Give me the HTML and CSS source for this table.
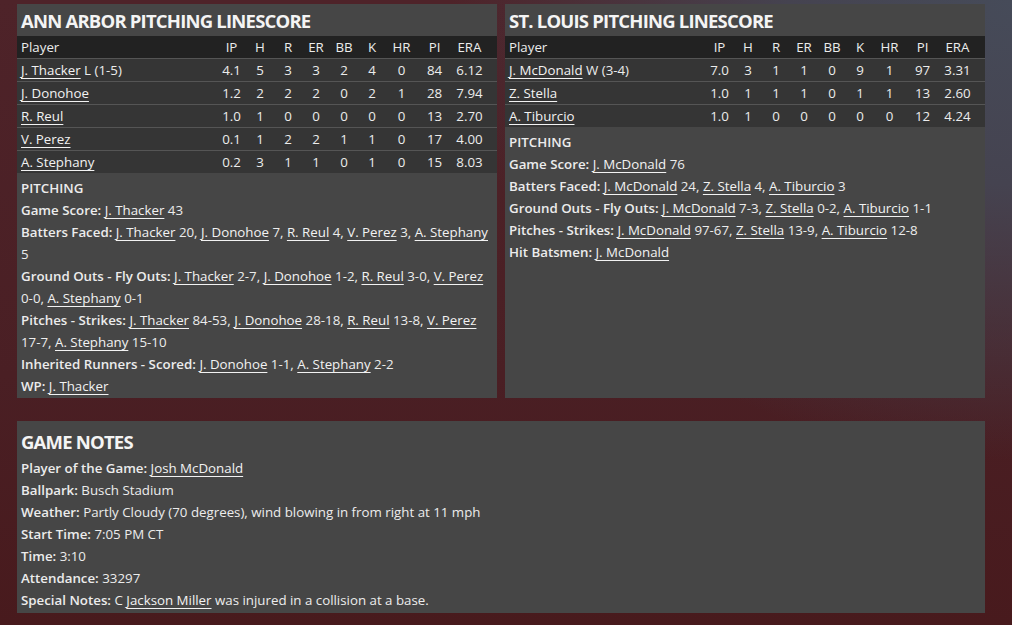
FILE: index.html
```html
<!DOCTYPE html>
<html>
<head>
<meta charset="utf-8">
<link rel="stylesheet" href="styles.css">
</head>
<body>
<div class="page">
  <div class="top-row">
    <section class="panel">
      <h2 class="panel-title">ANN ARBOR PITCHING LINESCORE</h2>
      <table class="linescore">
        <colgroup>
          <col class="c-player"><col class="c-ip"><col class="c-n"><col class="c-n"><col class="c-n"><col class="c-n"><col class="c-n"><col class="c-hr"><col class="c-w"><col class="c-w"><col class="c-pad">
        </colgroup>
        <thead>
          <tr><th class="player">Player</th><th>IP</th><th>H</th><th>R</th><th>ER</th><th>BB</th><th>K</th><th>HR</th><th>PI</th><th>ERA</th><th></th></tr>
        </thead>
        <tbody>
          <tr><td class="player"><a>J. Thacker</a> L (1-5)</td><td>4.1</td><td>5</td><td>3</td><td>3</td><td>2</td><td>4</td><td>0</td><td>84</td><td>6.12</td><td></td></tr>
          <tr><td class="player"><a>J. Donohoe</a></td><td>1.2</td><td>2</td><td>2</td><td>2</td><td>0</td><td>2</td><td>1</td><td>28</td><td>7.94</td><td></td></tr>
          <tr><td class="player"><a>R. Reul</a></td><td>1.0</td><td>1</td><td>0</td><td>0</td><td>0</td><td>0</td><td>0</td><td>13</td><td>2.70</td><td></td></tr>
          <tr><td class="player"><a>V. Perez</a></td><td>0.1</td><td>1</td><td>2</td><td>2</td><td>1</td><td>1</td><td>0</td><td>17</td><td>4.00</td><td></td></tr>
          <tr><td class="player"><a>A. Stephany</a></td><td>0.2</td><td>3</td><td>1</td><td>1</td><td>0</td><td>1</td><td>0</td><td>15</td><td>8.03</td><td></td></tr>
        </tbody>
      </table>
      <div class="notes">
        <p><b>PITCHING</b></p>
        <p><b>Game Score:</b> <a>J. Thacker</a> 43</p>
        <p><b>Batters Faced:</b> <a>J. Thacker</a> 20, <a>J. Donohoe</a> 7, <a>R. Reul</a> 4, <a>V. Perez</a> 3, <a>A. Stephany</a> 5</p>
        <p><b>Ground Outs - Fly Outs:</b> <a>J. Thacker</a> <span class="nw">2-7,</span> <a>J. Donohoe</a> <span class="nw">1-2,</span> <a>R. Reul</a> <span class="nw">3-0,</span> <a>V. Perez</a> <span class="nw">0-0,</span> <a>A. Stephany</a> <span class="nw">0-1</span></p>
        <p><b>Pitches - Strikes:</b> <a>J. Thacker</a> <span class="nw">84-53,</span> <a>J. Donohoe</a> <span class="nw">28-18,</span> <a>R. Reul</a> <span class="nw">13-8,</span> <a>V. Perez</a> <span class="nw">17-7,</span> <a>A. Stephany</a> <span class="nw">15-10</span></p>
        <p><b>Inherited Runners - Scored:</b> <a>J. Donohoe</a> <span class="nw">1-1,</span> <a>A. Stephany</a> <span class="nw">2-2</span></p>
        <p><b>WP:</b> <a>J. Thacker</a></p>
      </div>
    </section>
    <section class="panel">
      <h2 class="panel-title">ST. LOUIS PITCHING LINESCORE</h2>
      <table class="linescore">
        <colgroup>
          <col class="c-player"><col class="c-ip"><col class="c-n"><col class="c-n"><col class="c-n"><col class="c-n"><col class="c-n"><col class="c-hr"><col class="c-w"><col class="c-w"><col class="c-pad">
        </colgroup>
        <thead>
          <tr><th class="player">Player</th><th>IP</th><th>H</th><th>R</th><th>ER</th><th>BB</th><th>K</th><th>HR</th><th>PI</th><th>ERA</th><th></th></tr>
        </thead>
        <tbody>
          <tr><td class="player"><a>J. McDonald</a> W (3-4)</td><td>7.0</td><td>3</td><td>1</td><td>1</td><td>0</td><td>9</td><td>1</td><td>97</td><td>3.31</td><td></td></tr>
          <tr><td class="player"><a>Z. Stella</a></td><td>1.0</td><td>1</td><td>1</td><td>1</td><td>0</td><td>1</td><td>1</td><td>13</td><td>2.60</td><td></td></tr>
          <tr><td class="player"><a>A. Tiburcio</a></td><td>1.0</td><td>1</td><td>0</td><td>0</td><td>0</td><td>0</td><td>0</td><td>12</td><td>4.24</td><td></td></tr>
        </tbody>
      </table>
      <div class="notes">
        <p><b>PITCHING</b></p>
        <p><b>Game Score:</b> <a>J. McDonald</a> 76</p>
        <p><b>Batters Faced:</b> <a>J. McDonald</a> 24, <a>Z. Stella</a> 4, <a>A. Tiburcio</a> 3</p>
        <p><b>Ground Outs - Fly Outs:</b> <a>J. McDonald</a> <span class="nw">7-3,</span> <a>Z. Stella</a> <span class="nw">0-2,</span> <a>A. Tiburcio</a> <span class="nw">1-1</span></p>
        <p><b>Pitches - Strikes:</b> <a>J. McDonald</a> <span class="nw">97-67,</span> <a>Z. Stella</a> <span class="nw">13-9,</span> <a>A. Tiburcio</a> <span class="nw">12-8</span></p>
        <p><b>Hit Batsmen:</b> <a>J. McDonald</a></p>
      </div>
    </section>
  </div>
  <section class="panel game-notes">
    <h2 class="panel-title">GAME NOTES</h2>
    <div class="notes">
      <p><b>Player of the Game:</b> <a>Josh McDonald</a></p>
      <p><b>Ballpark:</b> Busch Stadium</p>
      <p><b>Weather:</b> Partly Cloudy (70 degrees), wind blowing in from right at 11 mph</p>
      <p><b>Start Time:</b> 7:05 PM CT</p>
      <p><b>Time:</b> 3:10</p>
      <p><b>Attendance:</b> 33297</p>
      <p><b>Special Notes:</b> C <a>Jackson Miller</a> was injured in a collision at a base.</p>
    </div>
  </section>
</div>
</body>
</html>
```

FILE: styles.css
```css
html, body {
  margin: 0;
  padding: 0;
  height: 100%;
}
body {
  width: 1012px;
  height: 625px;
  overflow: hidden;
  font-family: "Open Sans", "Noto Sans", sans-serif;
  font-size: 13.3px;
  color: #ececec;
  background:
    radial-gradient(ellipse 560px 460px at 100% 0%, #464b59 0%, #454350 40%, rgba(74, 34, 40, 0) 100%),
    linear-gradient(180deg, #4e2329 0%, #4a1f24 60%, #481a1d 100%);
}
.page {
  padding: 4px 27px 0 17px;
  display: flex;
  flex-direction: column;
  gap: 23px;
}
.top-row {
  display: flex;
  gap: 8px;
}
.panel {
  width: 480px;
  background: #464646;
  display: flex;
  flex-direction: column;
}
.top-row .panel {
  height: 394px;
}
.panel-title {
  margin: 0;
  height: 32px;
  line-height: 33px;
  padding-left: 4px;
  font-size: 18.5px;
  font-weight: 700;
  color: #f4f4f4;
  letter-spacing: -0.8px;
}
.linescore {
  width: 480px;
  border-collapse: collapse;
  table-layout: fixed;
}
.c-player { width: 200px; }
.c-ip { width: 29px; }
.c-n { width: 28px; }
.c-hr { width: 31px; }
.c-w { width: 35px; }
.c-pad { width: 10px; }
.linescore th,
.linescore td {
  height: 22px;
  padding: 0;
  text-align: center;
  font-weight: 400;
  white-space: nowrap;
  line-height: 22px;
}
.linescore thead tr {
  background: #222222;
}
.linescore tbody tr {
  background: #353535;
  border-top: 1px solid #555555;
}
.linescore .player {
  text-align: left;
  padding-left: 4px;
}
a {
  color: #f2f2f2;
  text-decoration: underline;
  text-underline-offset: 3px;
}
.nw {
  white-space: nowrap;
}
.notes {
  padding: 4px 4px 0 4px;
}
.notes p {
  margin: 0;
  line-height: 22px;
}
.notes b {
  font-weight: 600;
}
.game-notes {
  width: 968px;
  height: 192px;
  padding-top: 4px;
  box-sizing: border-box;
}
.game-notes .notes {
  padding-top: 0;
}
```
